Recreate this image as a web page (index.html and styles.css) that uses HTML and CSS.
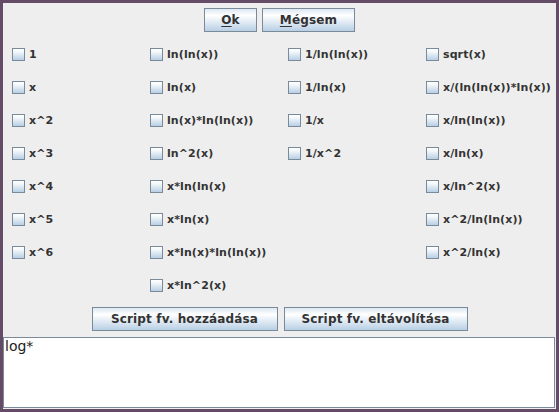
FILE: index.html
```html
<!DOCTYPE html>
<html>
<head>
<meta charset="utf-8">
<link rel="stylesheet" href="styles.css">
</head>
<body>
<div class="frame">
  <div class="btn-row top">
    <button class="btn btn-ok"><u>O</u>k</button>
    <button class="btn btn-cancel"><u>M</u>égsem</button>
  </div>
  <div class="grid">
    <div class="col">
      <label class="item"><span class="box"></span>1</label>
      <label class="item"><span class="box"></span>x</label>
      <label class="item"><span class="box"></span>x^2</label>
      <label class="item"><span class="box"></span>x^3</label>
      <label class="item"><span class="box"></span>x^4</label>
      <label class="item"><span class="box"></span>x^5</label>
      <label class="item"><span class="box"></span>x^6</label>
    </div>
    <div class="col">
      <label class="item"><span class="box"></span>ln(ln(x))</label>
      <label class="item"><span class="box"></span>ln(x)</label>
      <label class="item"><span class="box"></span>ln(x)*ln(ln(x))</label>
      <label class="item"><span class="box"></span>ln^2(x)</label>
      <label class="item"><span class="box"></span>x*ln(ln(x)</label>
      <label class="item"><span class="box"></span>x*ln(x)</label>
      <label class="item"><span class="box"></span>x*ln(x)*ln(ln(x))</label>
      <label class="item"><span class="box"></span>x*ln^2(x)</label>
    </div>
    <div class="col">
      <label class="item"><span class="box"></span>1/ln(ln(x))</label>
      <label class="item"><span class="box"></span>1/ln(x)</label>
      <label class="item"><span class="box"></span>1/x</label>
      <label class="item"><span class="box"></span>1/x^2</label>
    </div>
    <div class="col">
      <label class="item"><span class="box"></span>sqrt(x)</label>
      <label class="item"><span class="box"></span>x/(ln(ln(x))*ln(x))</label>
      <label class="item"><span class="box"></span>x/ln(ln(x))</label>
      <label class="item"><span class="box"></span>x/ln(x)</label>
      <label class="item"><span class="box"></span>x/ln^2(x)</label>
      <label class="item"><span class="box"></span>x^2/ln(ln(x))</label>
      <label class="item"><span class="box"></span>x^2/ln(x)</label>
    </div>
  </div>
  <div class="btn-row bottom">
    <button class="btn btn-add">Script fv. hozzáadása</button>
    <button class="btn btn-remove">Script fv. eltávolítása</button>
  </div>
  <div class="textarea">log*</div>
</div>
</body>
</html>
```
FILE: styles.css
```css
html, body {
  margin: 0;
  padding: 0;
  background: #654c66;
}
.frame {
  box-sizing: border-box;
  width: 559px;
  height: 412px;
  border: 3px solid #654c66;
  background: #eeeeee;
  display: flex;
  flex-direction: column;
  font-family: "DejaVu Sans", sans-serif;
  color: #333333;
}
.btn-row {
  display: flex;
  justify-content: center;
}
.btn-row.top {
  margin-top: 5px;
  gap: 5px;
}
.btn-row.bottom {
  margin-top: 5px;
  gap: 6px;
}
.btn {
  box-sizing: border-box;
  height: 24px;
  margin: 0;
  padding: 0;
  border: 1px solid #7a8a99;
  border-radius: 0;
  background: linear-gradient(#dde8f3 0%, #ffffff 30%, #b8cfe5 100%);
  font-family: "DejaVu Sans", sans-serif;
  font-weight: bold;
  font-size: 12px;
  letter-spacing: 0.15px;
  color: #333333;
  text-align: center;
  line-height: 22px;
}
.btn u {
  text-decoration-thickness: 1px;
  text-underline-offset: 2px;
}
.btn-ok { width: 53px; }
.btn-cancel { width: 93px; }
.btn-add { width: 186px; }
.btn-remove { width: 184px; }
.grid {
  margin-top: 6px;
  display: flex;
  height: 264px;
}
.col {
  width: 138px;
  display: flex;
  flex-direction: column;
}
.item {
  height: 33px;
  display: flex;
  align-items: center;
  padding-left: 9px;
  gap: 4px;
  font-weight: bold;
  font-size: 11px;
  letter-spacing: 0.1px;
  color: #333333;
  white-space: nowrap;
}
.box {
  box-sizing: border-box;
  width: 13px;
  height: 13px;
  flex: none;
  border: 1px solid #7a8a99;
  background: linear-gradient(#ffffff 0%, #f4f8fb 25%, #b8cfe5 100%);
}
.textarea {
  box-sizing: border-box;
  margin-top: 6px;
  margin-right: 1px;
  height: 71px;
  border: 1px solid #7a8a99;
  background: #ffffff;
  padding: 0 1px;
  font-size: 14px;
  line-height: 17px;
  color: #222222;
}
```
